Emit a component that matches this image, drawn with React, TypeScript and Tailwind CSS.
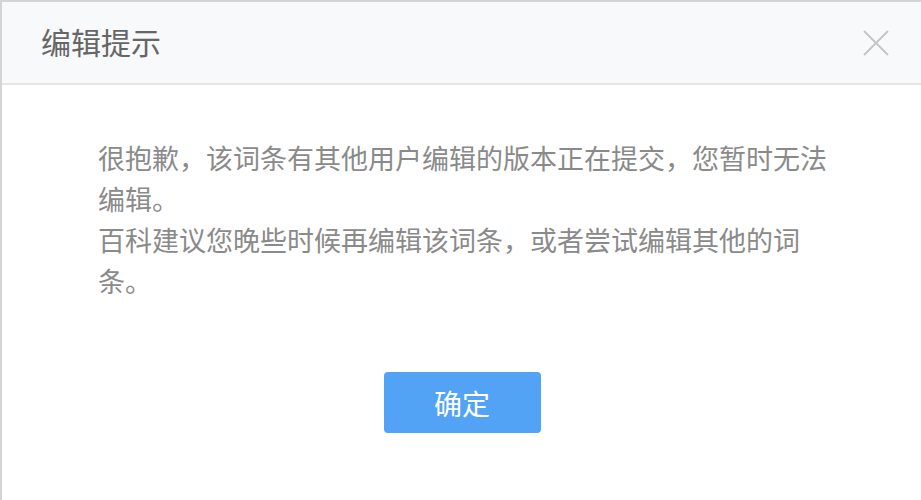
import React from 'react';

const App: React.FC = () => {
  return (
    <div
      className="w-[921px] h-[500px] overflow-hidden bg-white"
      style={{ fontFamily: '"Noto Sans CJK SC", "Noto Sans", sans-serif' }}
    >
      <div className="w-[940px] h-[520px] border-l-2 border-t-2 border-[#d4d4d4] bg-white">
        <div className="h-[83px] bg-[#f8f9fb] border-b-2 border-[#e6e6e6] flex items-center justify-between pl-[39px] pr-[51px]">
          <h3 className="text-[30px] text-[#666] leading-none -mt-1">编辑提示</h3>
          <button className="w-[26px] h-[26px] text-[#c4c4c4]">
            <svg viewBox="0 0 26 26" className="w-[26px] h-[26px]" fill="none" stroke="currentColor" strokeWidth="1.8">
              <path d="M1 1 L25 25 M25 1 L1 25" />
            </svg>
          </button>
        </div>
        <div className="pt-[52px] pl-[96px]">
          <p className="w-[742px] text-[27px] leading-[41px] text-[#8a8a8a]">
            很抱歉，该词条有其他用户编辑的版本正在提交，您暂时无法编辑。
            <br />
            百科建议您晚些时候再编辑该词条，或者尝试编辑其他的词条。
          </p>
        </div>
        <div className="flex justify-center pt-[71px] pr-[18px]">
          <button className="w-[157px] h-[61px] rounded-[4px] bg-[#52a3f5] text-white text-[28px] leading-none">
            确定
          </button>
        </div>
      </div>
    </div>
  );
};

export default App;
